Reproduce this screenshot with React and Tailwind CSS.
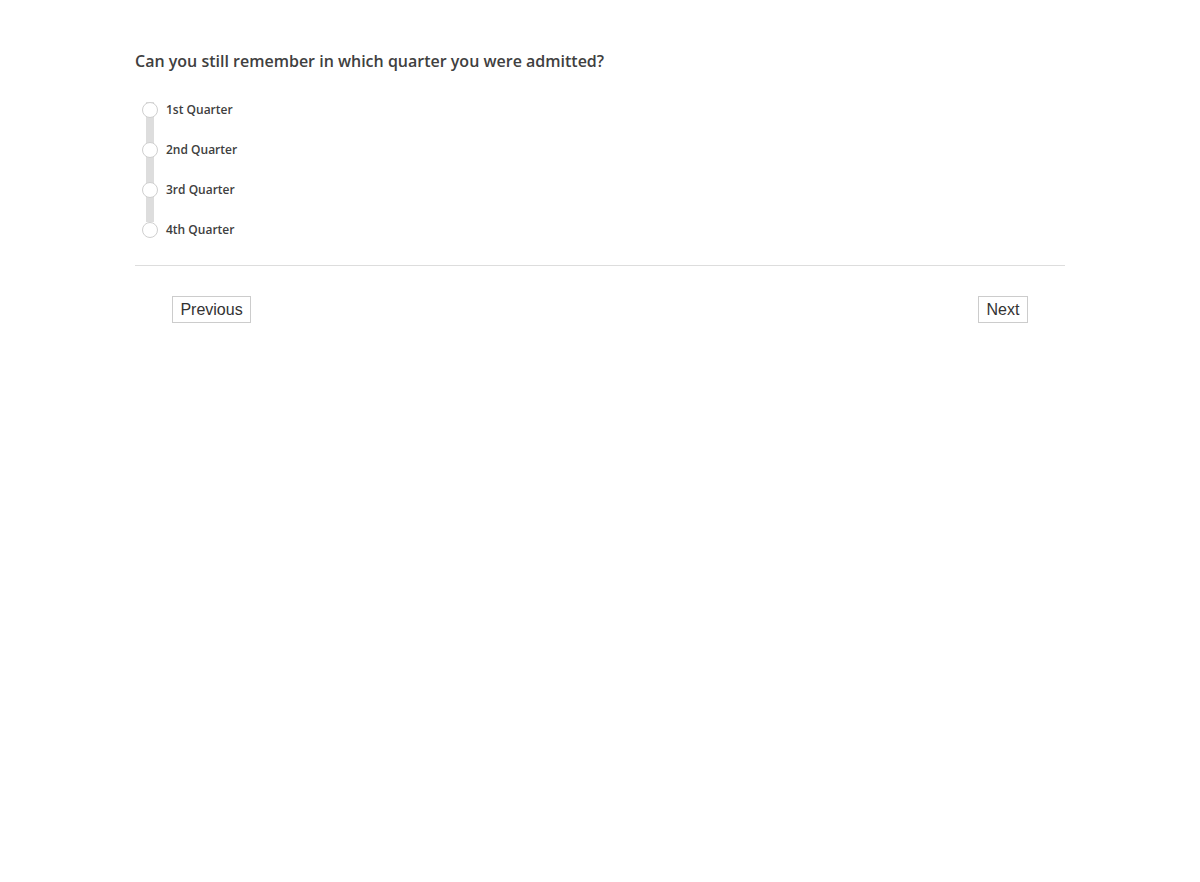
export default function App() {
  const options = ["1st Quarter", "2nd Quarter", "3rd Quarter", "4th Quarter"];
  return (
    <div className="min-h-[882px] w-full bg-white" style={{ fontFamily: '"Open Sans", sans-serif' }}>
      <div className="mx-auto w-[930px] pt-[50px]">
        <h2 className="text-[16px] font-semibold leading-[22px] text-[#404040]">
          Can you still remember in which quarter you were admitted?
        </h2>
        <div className="relative mt-[18px] pl-[7px]">
          <div className="absolute left-[11px] top-[12px] h-[120px] w-[8px] bg-[#dddddd]" />
          <div className="relative flex flex-col">
            {options.map((o) => (
              <label key={o} className="flex h-[40px] items-center gap-[8px]">
                <span className="h-[16px] w-[16px] rounded-full border border-[#cfcfcf] bg-white" />
                <span className="text-[12px] font-semibold text-[#404040]">{o}</span>
              </label>
            ))}
          </div>
        </div>
        <div className="mt-[15px] border-t border-[#dddddd]" />
        <div className="flex justify-between px-[37px] pt-[30px]" style={{ fontFamily: '"Liberation Sans", Arial, sans-serif' }}>
          <button className="h-[27px] w-[79px] border border-[#cccccc] bg-white text-[16px] leading-none text-[#333333]">Previous</button>
          <button className="h-[27px] w-[50px] border border-[#cccccc] bg-white text-[16px] leading-none text-[#333333]">Next</button>
        </div>
      </div>
    </div>
  );
}
